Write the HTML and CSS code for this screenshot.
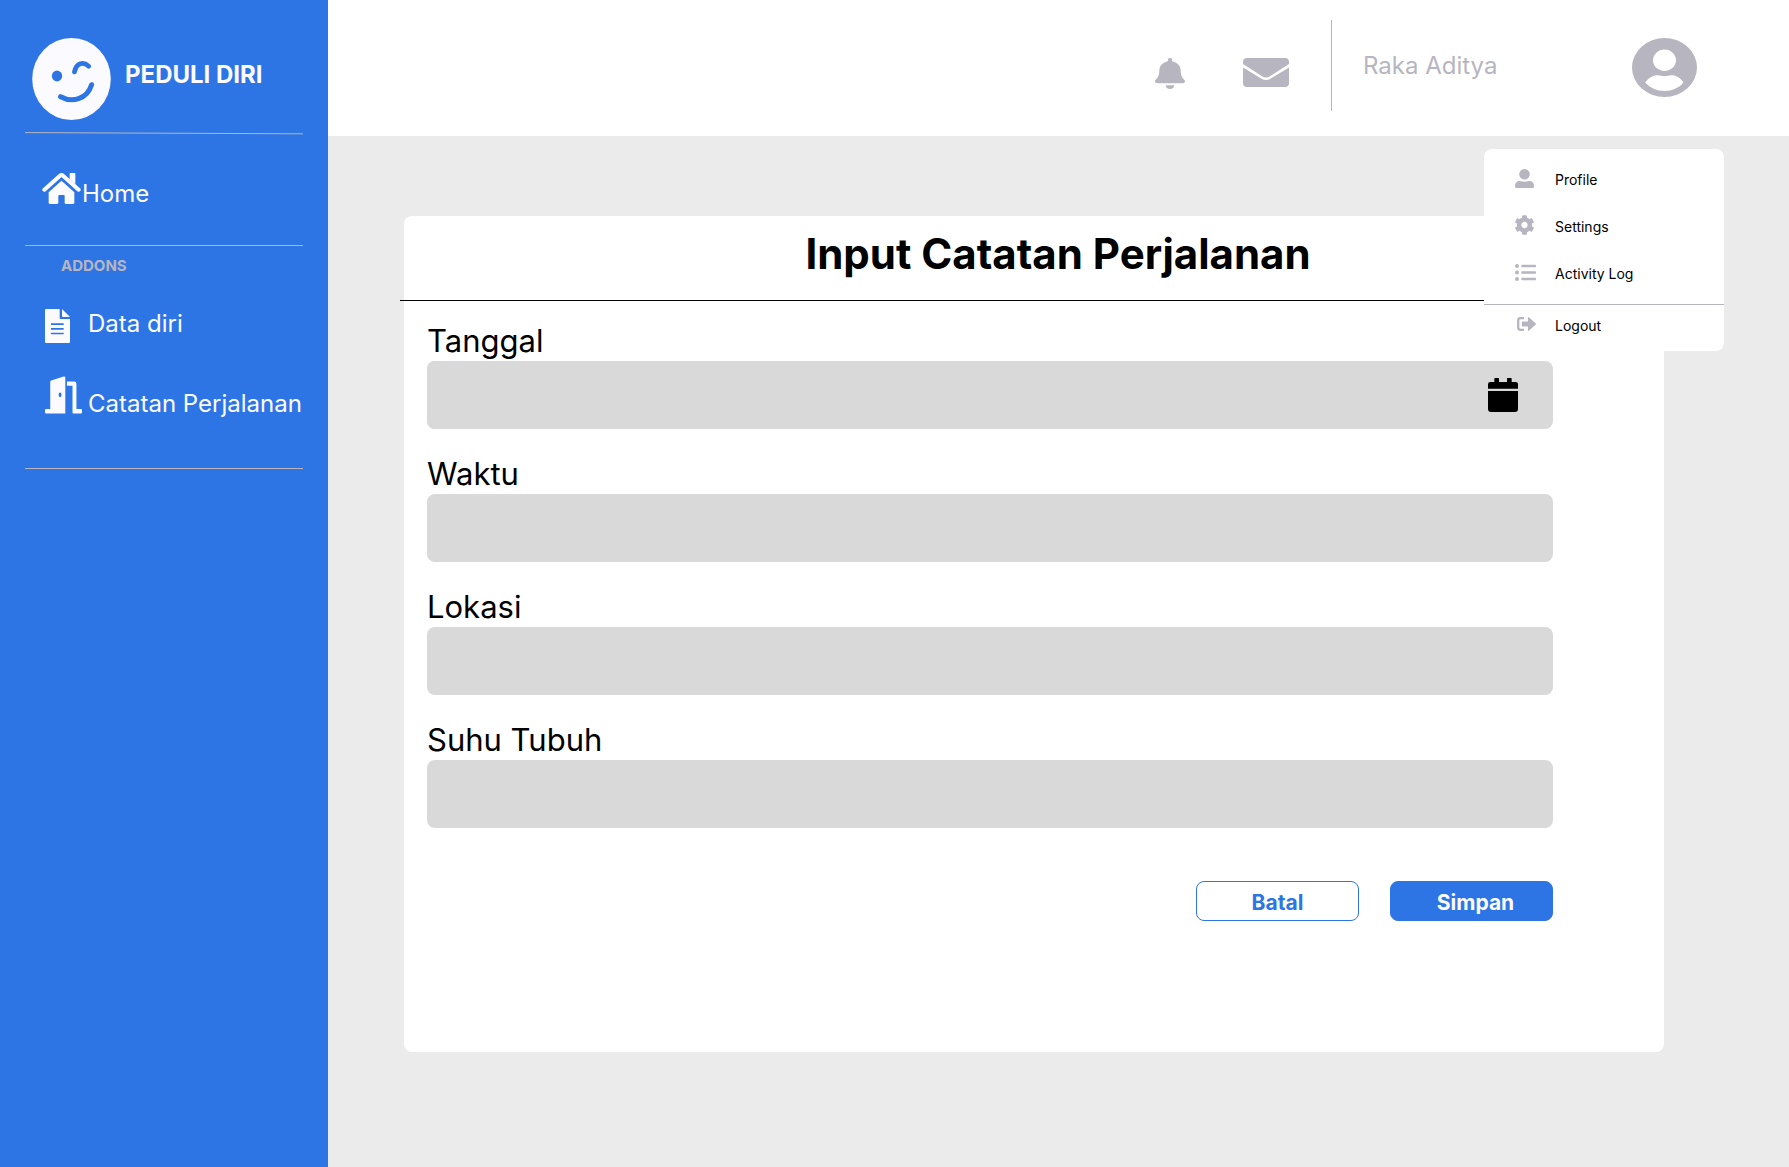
FILE: index.html
```html
<!DOCTYPE html>
<html lang="id">
<head>
<meta charset="utf-8">
<meta name="viewport" content="width=device-width, initial-scale=1">
<title>Peduli Diri - Input Catatan Perjalanan</title>
<link rel="stylesheet" href="styles.css">
</head>
<body>
<div class="app">
  <aside class="sidebar">
    <a class="brand" href="#">
      <svg class="brand-logo" viewBox="0 0 79 82" aria-hidden="true">
        <ellipse cx="39.5" cy="41" rx="39.3" ry="41" fill="#fbfaff"/>
        <ellipse cx="25" cy="38" rx="5.2" ry="5.4" fill="#2d75e4"/>
        <path d="M42.5 33.8C44.5 24.5 51.5 23.5 56.7 28.2" fill="none" stroke="#2d75e4" stroke-width="4.8" stroke-linecap="round"/>
        <path d="M28.6 58.7C40 65 55 61.5 59.6 46.7" fill="none" stroke="#2d75e4" stroke-width="5" stroke-linecap="round"/>
      </svg>
      <span class="brand-name">PEDULI DIRI</span>
    </a>
    <svg class="brand-rule" viewBox="0 0 278 3" preserveAspectRatio="none" aria-hidden="true"><path d="M0 .6L278 1.8" stroke="#b7b5bf" stroke-width="1"/></svg>
    <nav class="nav">
      <a class="nav-link nav-home" href="#">
        <svg class="icon-home" viewBox="126 519 115 93" aria-hidden="true" fill="#fbfaff">
          <path d="M208 521q0-2 2-2h13q2 0 2 2v32l-17-14z"/>
          <path d="M132 569L179 527q4.5-4 9 0L235 569" fill="none" stroke="#fbfaff" stroke-width="12" stroke-linecap="round"/>
          <path d="M145 577L183.5 542 222 577v31q0 4-4 4h-21q-4 0-4-4v-20q0-3-3-3h-13q-3 0-3 3v20q0 4-4 4h-21q-4 0-4-4z"/>
        </svg>
        <span>Home</span>
      </a>
      <hr class="rule">
      <p class="nav-heading">ADDONS</p>
      <a class="nav-link nav-data" href="#">
        <span class="icon-slot">
          <svg class="icon-doc" viewBox="135 237 75 102" aria-hidden="true" fill="#fbfaff">
            <path fill-rule="evenodd" d="M138 237h41v27q0 3 3 3h28v69q0 3-3 3h-69q-3 0-3-3v-96q0-3 3-3zM153 280v5h38v-5zM153 294v5h38v-5zM153 308v5h38v-5z"/>
            <path d="M186 237l24 24h-21q-3 0-3-3z"/>
          </svg>
        </span>
        <span>Data diri</span>
      </a>
      <a class="nav-link nav-trip" href="#">
        <span class="icon-slot">
          <svg class="icon-door" viewBox="135 438 113 113" aria-hidden="true" fill="#fbfaff">
            <path fill-rule="evenodd" d="M151 455q0-4 3-5l38-12q5-1 5 4v109h-59q-3 0-3-3v-8q0-3 3-3h13zM181 487a4.5 7 0 0 0 0 14a4.5 7 0 0 0 0-14z"/>
            <path d="M202 453h22q7 0 7 7v77h14q3 0 3 3v8q0 3-3 3h-23q-3 0-3-3v-82h-17z"/>
          </svg>
        </span>
        <span>Catatan Perjalanan</span>
      </a>
      <hr class="rule">
    </nav>
  </aside>

  <div class="content">
    <header class="topbar">
      <div class="topbar-actions">
        <button class="icon-button" type="button" aria-label="Notifikasi">
          <svg class="icon-bell" viewBox="0 0 448 512" preserveAspectRatio="none" aria-hidden="true"><path d="M224 512c35.32 0 63.97-28.65 63.97-64H160.03c0 35.35 28.65 64 63.97 64zm215.39-149.71c-19.32-20.76-55.47-51.99-55.47-154.29 0-77.7-54.48-139.9-127.94-155.16V32c0-17.67-14.32-32-31.98-32s-31.98 14.33-31.98 32v20.84C118.56 68.1 64.08 130.3 64.08 208c0 102.3-36.15 133.53-55.47 154.29-6 6.45-8.66 14.16-8.61 21.71.11 16.4 12.98 32 32.1 32h383.8c19.12 0 32-15.6 32.1-32 .05-7.55-2.61-15.27-8.61-21.71z"/></svg>
        </button>
        <button class="icon-button" type="button" aria-label="Pesan">
          <svg class="icon-mail" viewBox="0 0 46 29" aria-hidden="true"><path d="M4 0h38q4 0 4 4v2L26.5 18.5q-3.5 2-7 0L0 6V4q0-4 4-4z"/><path d="M0 9.5L18.5 20.8q4.5 2.4 9 0L46 9.5V25q0 4-4 4H4q-4 0-4-4z"/></svg>
        </button>
      </div>
      <div class="account">
        <span class="account-name">Raka Aditya</span>
        <button class="icon-button account-button" type="button" aria-label="Akun" aria-expanded="true">
          <svg class="icon-avatar" viewBox="0 0 65 59" aria-hidden="true"><path fill-rule="evenodd" d="M32.5 0a32.5 29.5 0 0 1 0 59a32.5 29.5 0 0 1 0-59zM32.5 11.5a11.5 10.7 0 0 0 0 21.4a11.5 10.7 0 0 0 0-21.4zM13.3 44.5C17 39 22 37 26 37.3c2.5.2 3.5 1 6.5 1s4-.8 6.5-1c4-.3 9 1.7 12.5 7.2C47 50 40 53 32.5 53S18 50 13.3 44.5z"/></svg>
        </button>
      </div>
    </header>

    <ul class="menu">
      <li><a class="menu-link" href="#">
        <span class="menu-icon"><svg width="19" height="19" viewBox="0 0 19 19" aria-hidden="true"><circle cx="9.5" cy="5.3" r="5.3"/><path d="M0 17.5C0 13.5 2 12 5 12q4.5 1.3 9 0c3 0 5 1.5 5 5.5q0 1.5-1.5 1.5h-16Q0 19 0 17.5z"/></svg></span>Profile</a></li>
      <li><a class="menu-link" href="#">
        <span class="menu-icon"><svg width="19" height="20" viewBox="16 8 480 496" aria-hidden="true"><path d="M487.4 315.7l-42.6-24.6c4.3-23.2 4.3-47 0-70.2l42.6-24.6c4.9-2.8 7.1-8.6 5.5-14-11.1-35.6-30-67.8-54.7-94.6-3.8-4.1-10-5.1-14.8-2.3L380.8 110c-17.9-15.4-38.5-27.3-60.8-35.1V25.8c0-5.6-3.9-10.5-9.4-11.7-36.7-8.2-74.3-7.8-109.2 0-5.5 1.2-9.4 6.1-9.4 11.7V75c-22.2 7.9-42.8 19.8-60.8 35.1L88.7 85.5c-4.9-2.8-11-1.9-14.8 2.3-24.7 26.7-43.6 58.9-54.7 94.6-1.7 5.4.6 11.2 5.5 14L67.3 221c-4.3 23.2-4.3 47 0 70.2l-42.6 24.6c-4.9 2.8-7.1 8.6-5.5 14 11.1 35.6 30 67.8 54.7 94.6 3.8 4.1 10 5.1 14.8 2.3l42.6-24.6c17.9 15.4 38.5 27.3 60.8 35.1v49.2c0 5.6 3.9 10.5 9.4 11.7 36.7 8.2 74.3 7.8 109.2 0 5.5-1.2 9.4-6.1 9.4-11.7v-49.2c22.2-7.9 42.8-19.8 60.8-35.1l42.6 24.6c4.9 2.8 11 1.9 14.8-2.3 24.7-26.7 43.6-58.9 54.7-94.6 1.5-5.5-.7-11.3-5.6-14.1zM256 336c-44.1 0-80-35.9-80-80s35.9-80 80-80 80 35.9 80 80-35.9 80-80 80z"/></svg></span>Settings</a></li>
      <li><a class="menu-link" href="#">
        <span class="menu-icon"><svg width="21" height="17" viewBox="0 0 21 17" aria-hidden="true"><circle cx="2" cy="2" r="2"/><circle cx="2" cy="8.5" r="2"/><circle cx="2" cy="15" r="2"/><rect x="6.3" y=".8" width="14.7" height="2.5" rx=".8"/><rect x="6.3" y="7.3" width="14.7" height="2.5" rx=".8"/><rect x="6.3" y="13.8" width="14.7" height="2.5" rx=".8"/></svg></span>Activity Log</a></li>
      <li class="menu-last"><a class="menu-link" href="#">
        <span class="menu-icon menu-icon-logout"><svg width="19" height="14" viewBox="0 0 19 14" aria-hidden="true"><path d="M7 1.2H3.5Q1.2 1.2 1.2 3.5v7q0 2.3 2.3 2.3H7" fill="none" stroke="#b7b5bf" stroke-width="2.3"/><path d="M5.5 4.5h5.500V1q0-1.500 1.200-.6l6.300 5.800q.9.800 0 1.600l-6.300 5.800Q11 14.500 11 13V9.500H5.500q-.7 0-.7-.7V5.200q0-.7.7-.7z"/></svg></span>Logout</a></li>
    </ul>

    <main class="main">
      <section class="card">
        <div class="card-header"><h1 class="card-title">Input Catatan Perjalanan</h1></div>
        <form class="form">
          <div class="field">
            <label class="label" for="tanggal">Tanggal</label>
            <div class="date-box">
              <input class="input" id="tanggal" type="text">
              <button class="icon-button" type="button" aria-label="Pilih tanggal">
                <svg class="icon-calendar" viewBox="0 0 90 102" aria-hidden="true"><path d="M0 19q0-7 7-7h12V2q0-2 2-2h10q2 0 2 2v10h24V2q0-2 2-2h10q2 0 2 2v10h12q7 0 7 7v13H0zM0 39h90v54q0 9-9 9H9q-9 0-9-9z"/></svg>
              </button>
            </div>
          </div>
          <div class="field">
            <label class="label" for="waktu">Waktu</label>
            <input class="input" id="waktu" type="text">
          </div>
          <div class="field">
            <label class="label" for="lokasi">Lokasi</label>
            <input class="input" id="lokasi" type="text">
          </div>
          <div class="field">
            <label class="label" for="suhu">Suhu Tubuh</label>
            <input class="input" id="suhu" type="text">
          </div>
          <div class="actions">
            <button class="button button-outline" type="button">Batal</button>
            <button class="button button-primary" type="submit">Simpan</button>
          </div>
        </form>
      </section>
    </main>
  </div>
</div>
</body>
</html>
```
FILE: styles.css
```css
* {
  box-sizing: border-box;
}

body {
  margin: 0;
  font-family: Inter, "Liberation Sans", sans-serif;
  color: #000;
  background: #ebebeb;
}

a {
  color: inherit;
  text-decoration: none;
}

svg {
  display: block;
  flex: none;
}

.app {
  display: flex;
  min-height: 100vh;
}

/* Sidebar */
.sidebar {
  flex: 0 0 328px;
  padding: 38px 25px;
  background: #2d75e4;
  color: #fbfaff;
}

.brand {
  display: flex;
  align-items: center;
  gap: 14px;
  padding-left: 7px;
}

.brand-logo {
  width: 79px;
  height: 82px;
}

.brand-name {
  padding-bottom: 9px;
  font-size: 24px;
  line-height: 29px;
  font-weight: 700;
}

.brand-rule {
  width: 100%;
  height: 3px;
  margin-top: 12px;
}

.nav-link {
  display: flex;
  font-size: 24px;
  line-height: 29px;
  white-space: nowrap;
}

.nav-home {
  align-items: flex-end;
  gap: 1px;
  margin-top: 38px;
  padding-left: 17px;
}

.nav-data {
  align-items: flex-start;
  margin-top: 34px;
  padding-left: 20px;
}

.nav-trip {
  align-items: flex-end;
  margin: 33px 0 50px;
  padding-left: 20px;
}

.icon-slot {
  flex: 0 0 43px;
}

.icon-home {
  width: 39px;
  height: 31px;
  margin-bottom: 4px;
}

.icon-doc {
  width: 25px;
  height: 34px;
}

.icon-door {
  width: 37px;
  height: 38px;
  margin-bottom: 4px;
}

.rule {
  height: 1px;
  margin: 0;
  border: 0;
  background: #b7b5bf;
}

.nav-home + .rule {
  margin-top: 37px;
}

.nav-heading {
  margin: 11px 0 0;
  padding-left: 36px;
  font-size: 15px;
  line-height: 18px;
  font-weight: 700;
  color: #b7b5bf;
}

/* Top bar */
.content {
  position: relative;
  flex: 1;
  min-width: 0;
}

.topbar {
  display: flex;
  justify-content: flex-end;
  align-items: center;
  height: 136px;
  padding: 0 92px 5px 0;
  background: #fff;
}

.topbar-actions {
  display: flex;
  align-items: flex-start;
  gap: 58px;
  padding: 15px 42px 0 0;
}

.icon-button {
  padding: 0;
  border: 0;
  background: none;
  cursor: pointer;
}

.topbar svg,
.menu svg {
  fill: #b7b5bf;
}

.icon-bell {
  width: 30px;
  height: 31px;
}

.icon-mail {
  width: 46px;
  height: 29px;
}

.account {
  display: flex;
  justify-content: space-between;
  align-items: center;
  width: 366px;
  height: 91px;
  padding-left: 31px;
  border-left: 1px solid #b7b5bf;
}

.account-name {
  font-size: 24px;
  line-height: 29px;
  color: #b7b5bf;
}

.account-button {
  padding-top: 4px;
}

.icon-avatar {
  width: 65px;
  height: 59px;
}

/* Account menu, open over the page */
.menu {
  position: absolute;
  top: 149px;
  right: 65px;
  width: 240px;
  margin: 0;
  padding: 7px 0 6px;
  list-style: none;
  border-radius: 8px;
  background: #fff;
}

.menu-link {
  display: flex;
  align-items: center;
  height: 47px;
  padding-left: 31px;
  font-size: 14px;
  line-height: 17px;
}

.menu-icon {
  flex: 0 0 40px;
  padding-bottom: 3px;
}

.menu-icon-logout {
  padding-left: 2px;
}

.menu-last {
  margin-top: 7px;
  border-top: 1px solid #b7b5bf;
}

.menu-last .menu-link {
  height: 40px;
}

/* Form card */
.main {
  padding: 80px 125px 115px 76px;
}

.card {
  border-radius: 8px;
  background: #fff;
}

.card-header {
  margin-left: -4px;
  padding: 12px 0 21px 52px;
  border-bottom: 1px solid #000;
}

.card-title {
  margin: 0;
  font-size: 42px;
  line-height: 51px;
  font-weight: 700;
  text-align: center;
}

.form {
  display: flex;
  flex-direction: column;
  gap: 25px;
  padding: 20px 111px 131px 23px;
}

.field {
  display: flex;
  flex-direction: column;
}

.label {
  font-size: 31px;
  line-height: 40px;
}

.input {
  width: 100%;
  height: 68px;
  padding: 0 20px;
  border: 0;
  border-radius: 8px;
  background: #d9d9d9;
  font: inherit;
  font-size: 24px;
}

.date-box {
  display: flex;
  align-items: center;
  padding-right: 35px;
  border-radius: 8px;
  background: #d9d9d9;
}

.icon-calendar {
  width: 30px;
  height: 34px;
}

.actions {
  display: flex;
  justify-content: flex-end;
  gap: 31px;
  margin-top: 28px;
}

.button {
  width: 163px;
  height: 40px;
  padding: 2px 0 0;
  border: 1px solid #2d75e4;
  border-radius: 8px;
  font-family: inherit;
  font-size: 21px;
  line-height: 25px;
  font-weight: 700;
  cursor: pointer;
}

.button-outline {
  background: #fff;
  color: #2d75e4;
}

.button-primary {
  padding-left: 8px;
  background: #2d75e4;
  color: #fbfaff;
}
```
